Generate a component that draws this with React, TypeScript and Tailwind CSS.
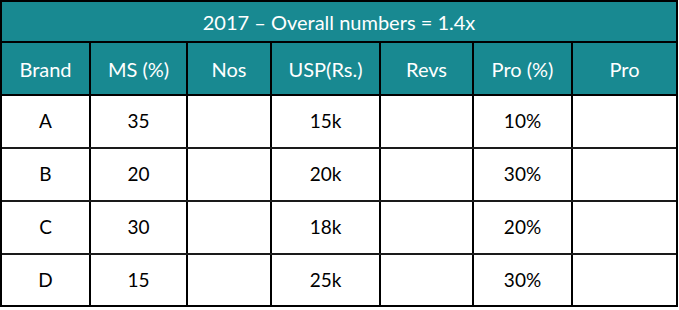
import React from "react";

const widths = ["w-[89px]", "w-[97px]", "w-[84px]", "w-[109px]", "w-[93px]", "w-[99px]", "w-[103px]"];
const headers = ["Brand", "MS (%)", "Nos", "USP(Rs.)", "Revs", "Pro (%)", "Pro"];
const rows = [
  ["A", "35", "", "15k", "", "10%", ""],
  ["B", "20", "", "20k", "", "30%", ""],
  ["C", "30", "", "18k", "", "20%", ""],
  ["D", "15", "", "25k", "", "30%", ""],
];

export default function App() {
  return (
    <div className="w-[679px] h-[310px] bg-white" style={{ fontFamily: "Lato, 'Open Sans', sans-serif" }}>
      <div className="w-[678px] border-2 border-black flex flex-col">
        <div className="h-[41px] border-b-2 border-black bg-[#188991] text-white text-[20px] flex items-center justify-center">
          2017 – Overall numbers = 1.4x
        </div>
        <div className="h-[53px] border-b-2 border-black bg-[#188991] text-white text-[20px] flex">
          {headers.map((h, i) => (
            <div
              key={i}
              className={`${widths[i]} ${i < 6 ? "border-r-2 border-black" : ""} flex items-center justify-center`}
            >
              {h}
            </div>
          ))}
        </div>
        {rows.map((r, ri) => (
          <div
            key={ri}
            className={`${ri < 3 ? "h-[53px] border-b-2 border-[#1a1a1a]" : "h-[50px]"} flex text-[19px] text-black`}
          >
            {r.map((c, i) => (
              <div
                key={i}
                className={`${widths[i]} ${i < 6 ? "border-r-2 border-black" : ""} flex items-center justify-center`}
              >
                {c}
              </div>
            ))}
          </div>
        ))}
      </div>
    </div>
  );
}
